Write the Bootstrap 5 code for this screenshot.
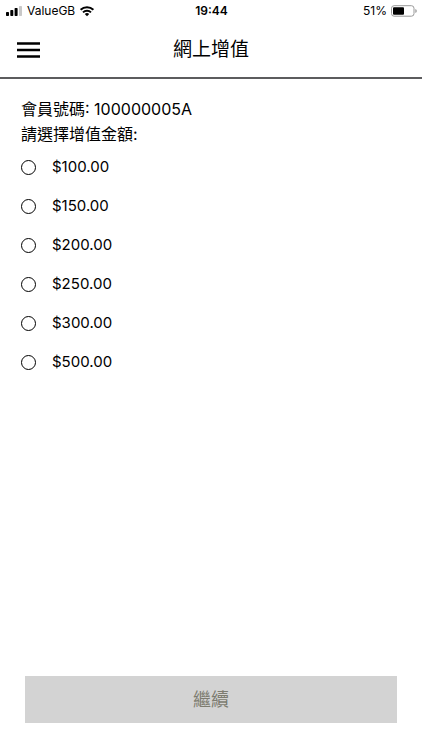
<!DOCTYPE html>
<html lang="zh-Hant">
<head>
<meta charset="utf-8">
<meta name="viewport" content="width=device-width, initial-scale=1">
<title>網上增值</title>
<link href="https://cdn.jsdelivr.net/npm/bootstrap@5.3.0/dist/css/bootstrap.min.css" rel="stylesheet">
<style>
body { font-family: Inter, "Noto Sans CJK TC", sans-serif; color: #000; background: #fff; }
.status-bar { height: 22px; font-size: 12px; line-height: 22px; padding: 0 5px 0 6px; }
.status-bar .clock { font-weight: 600; }
.app-header { height: 57px; border-bottom: 2px solid #5c5c5e; padding: 0 16px; }
.app-title { font-size: 19px; line-height: 28px; }
.side { flex: 1 1 0; }
.menu-btn svg { display: block; }
.intro { font-size: 16px; line-height: 25px; }
.amounts { padding-top: 1px; }
.amount-row { height: 39px; gap: 16px; font-size: 15px; }
.amount-row .form-check-input { width: 15px; height: 15px; margin: 0; border: 1px solid #000; background-color: #fff; }
.content { padding: 18px 21px 0; }
.action-bar { padding: 0 25px 27px; }
.continue-btn { height: 47px; font-size: 18px; line-height: 28px; }
.continue-btn:disabled { background: #d3d3d3; color: #7d7c70; border: 0; opacity: 1; }
</style>
<script src="https://cdn.jsdelivr.net/npm/bootstrap@5.3.0/dist/js/bootstrap.bundle.min.js" defer></script>
</head>
<body class="d-flex flex-column min-vh-100">
<div class="status-bar d-flex align-items-center">
  <div class="side d-flex align-items-center">
    <svg width="17" height="10" viewBox="0 0 17 10" aria-hidden="true"><rect y="6" width="3" height="4" rx=".7"/><rect x="4.3" y="4" width="3" height="6" rx=".7"/><rect x="8.6" y="2" width="3" height="8" rx=".7"/><rect x="13" width="3" height="10" rx=".7" fill="#c8c8c8"/></svg>
    <span class="ms-1 me-1">ValueGB</span>
    <svg width="16" height="12" viewBox="0 0 16 12" fill="none" stroke="#000" stroke-width="2" aria-hidden="true"><path d="M1.6 4.8a9.2 9.2 0 0 1 12.8 0M4 7.4a5.7 5.7 0 0 1 8 0"/><path d="M8 11.2 5.8 9.1a3.2 3.2 0 0 1 4.4 0z" fill="#000" stroke="none"/></svg>
  </div>
  <div class="clock">19:44</div>
  <div class="side d-flex align-items-center justify-content-end">
    <span class="me-1">51%</span>
    <svg width="26" height="12" viewBox="0 0 26 12" aria-hidden="true"><rect x=".5" y=".7" width="22.5" height="10.5" rx="2.6" fill="#fff" stroke="#999"/><rect x="2" y="2.2" width="11" height="7.5" rx="1"/><path d="M24.3 4v4q1.5-.6 1.5-2t-1.5-2z" fill="#999"/></svg>
  </div>
</div>
<header class="app-header d-flex align-items-center">
  <div class="side d-flex">
    <button type="button" class="menu-btn btn p-0 border-0" aria-label="Menu">
      <svg width="24" height="18" viewBox="0 0 24 18" aria-hidden="true"><path d="M1 1.2h23v2.6H1zM1 7.7h23v2.6H1zM1 14.2h23v2.6H1z"/></svg>
    </button>
  </div>
  <h1 class="app-title fw-normal m-0">網上增值</h1>
  <div class="side"></div>
</header>
<main class="content flex-grow-1">
  <p class="intro m-0">會員號碼: 100000005A</p>
  <p class="intro m-0" id="amount-label">請選擇增值金額:</p>
  <div class="amounts" role="radiogroup" aria-labelledby="amount-label">
    <div class="amount-row d-flex align-items-center"><input class="form-check-input" type="radio" name="amount" id="a100"><label for="a100">$100.00</label></div>
    <div class="amount-row d-flex align-items-center"><input class="form-check-input" type="radio" name="amount" id="a150"><label for="a150">$150.00</label></div>
    <div class="amount-row d-flex align-items-center"><input class="form-check-input" type="radio" name="amount" id="a200"><label for="a200">$200.00</label></div>
    <div class="amount-row d-flex align-items-center"><input class="form-check-input" type="radio" name="amount" id="a250"><label for="a250">$250.00</label></div>
    <div class="amount-row d-flex align-items-center"><input class="form-check-input" type="radio" name="amount" id="a300"><label for="a300">$300.00</label></div>
    <div class="amount-row d-flex align-items-center"><input class="form-check-input" type="radio" name="amount" id="a500"><label for="a500">$500.00</label></div>
  </div>
</main>
<footer class="action-bar">
  <button type="button" class="continue-btn btn w-100 rounded-0" disabled>繼續</button>
</footer>
</body>
</html>
